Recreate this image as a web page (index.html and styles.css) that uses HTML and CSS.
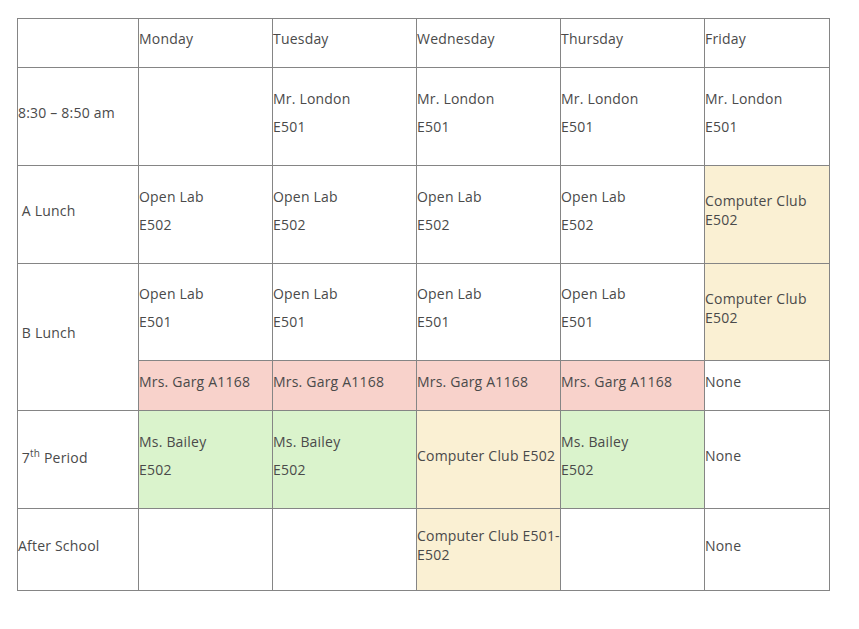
FILE: index.html
```html
<!DOCTYPE html>
<html>
<head>
<meta charset="utf-8">
<link rel="stylesheet" href="styles.css">
</head>
<body>
<table class="schedule">
  <colgroup>
    <col class="c0"><col class="c1"><col class="c2"><col class="c3"><col class="c4"><col class="c5">
  </colgroup>
  <tr class="r-head">
    <td><p></p></td>
    <td><p>Monday</p></td>
    <td><p>Tuesday</p></td>
    <td><p>Wednesday</p></td>
    <td><p>Thursday</p></td>
    <td><p>Friday</p></td>
  </tr>
  <tr class="r-tall">
    <td><p>8:30 – 8:50 am</p></td>
    <td></td>
    <td><p>Mr. London</p><p>E501</p></td>
    <td><p>Mr. London</p><p>E501</p></td>
    <td><p>Mr. London</p><p>E501</p></td>
    <td><p>Mr. London</p><p>E501</p></td>
  </tr>
  <tr class="r-tall">
    <td><p>&nbsp;A Lunch</p></td>
    <td><p>Open Lab</p><p>E502</p></td>
    <td><p>Open Lab</p><p>E502</p></td>
    <td><p>Open Lab</p><p>E502</p></td>
    <td><p>Open Lab</p><p>E502</p></td>
    <td class="yellow"><p>Computer Club<br>E502</p></td>
  </tr>
  <tr class="r-b">
    <td rowspan="2"><p>&nbsp;B Lunch</p></td>
    <td><p>Open Lab</p><p>E501</p></td>
    <td><p>Open Lab</p><p>E501</p></td>
    <td><p>Open Lab</p><p>E501</p></td>
    <td><p>Open Lab</p><p>E501</p></td>
    <td class="yellow"><p>Computer Club<br>E502</p></td>
  </tr>
  <tr class="r-short">
    <td class="pink"><p>Mrs. Garg A1168</p></td>
    <td class="pink"><p>Mrs. Garg A1168</p></td>
    <td class="pink"><p>Mrs. Garg A1168</p></td>
    <td class="pink"><p>Mrs. Garg A1168</p></td>
    <td><p>None</p></td>
  </tr>
  <tr class="r-tall">
    <td><p>&nbsp;7<sup>th</sup> Period</p></td>
    <td class="green"><p>Ms. Bailey</p><p>E502</p></td>
    <td class="green"><p>Ms. Bailey</p><p>E502</p></td>
    <td class="yellow"><p>Computer Club E502</p></td>
    <td class="green"><p>Ms. Bailey</p><p>E502</p></td>
    <td><p>None</p></td>
  </tr>
  <tr class="r-after">
    <td><p>After School</p></td>
    <td></td>
    <td></td>
    <td class="yellow"><p>Computer Club E501-E502</p></td>
    <td></td>
    <td><p>None</p></td>
  </tr>
</table>
</body>
</html>
```
FILE: styles.css
```css
html, body {
  margin: 0;
  padding: 0;
  background: #ffffff;
}
body {
  padding: 18px 0 0 17px;
  font-family: "Open Sans", "DejaVu Sans", sans-serif;
  font-size: 14px;
  letter-spacing: 0.2px;
  color: #4a4a4a;
}
.schedule {
  border-collapse: collapse;
  table-layout: fixed;
  width: 812px;
}
.c0 { width: 121px; }
.c1 { width: 134px; }
.c2 { width: 144px; }
.c3 { width: 144px; }
.c4 { width: 144px; }
.c5 { width: 125px; }
.schedule td {
  border: 1px solid #858585;
  padding: 0;
  vertical-align: middle;
  line-height: 19px;
}
.schedule p {
  margin: 0 0 9px 0;
}
.schedule sup {
  font-size: 10px;
  vertical-align: super;
}
.r-head { height: 49px; }
.r-tall { height: 98px; }
.r-b { height: 97px; }
.r-short { height: 50px; }
.r-after { height: 82px; }
.yellow { background: #faf0d3; }
.pink { background: #f8d2cb; }
.green { background: #daf3cc; }
```
